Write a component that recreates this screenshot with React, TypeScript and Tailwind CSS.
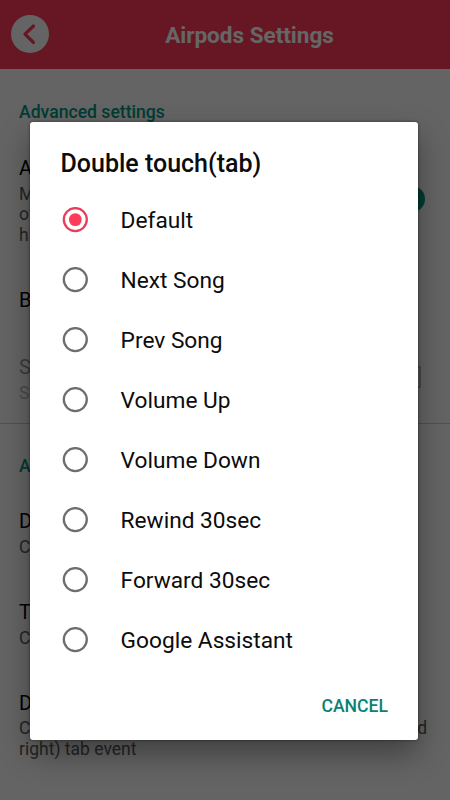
import clsx from "clsx";

const options = [
  "Default",
  "Next Song",
  "Prev Song",
  "Volume Up",
  "Volume Down",
  "Rewind 30sec",
  "Forward 30sec",
  "Google Assistant",
];

type RadioRowProps = {
  label: string;
  checked: boolean;
};

function RadioRow({ label, checked }: RadioRowProps) {
  return (
    <li className="flex h-[60.1px] items-center pl-8">
      <svg viewBox="0 0 26 26" className="h-[26px] w-[26px] shrink-0">
        <circle
          cx="13.3"
          cy="12.6"
          r="11.5"
          fill="none"
          strokeWidth="2.3"
          className={clsx(checked ? "stroke-[#e83e5b]" : "stroke-[#6e6e6e]")}
        />
        {checked ? (
          <circle cx="13.3" cy="12.6" r="6.4" className="fill-[#ff3b5c]" />
        ) : null}
      </svg>
      <span className="pt-0.5 pl-[32.6px] text-[22.7px] leading-7">
        {label}
      </span>
    </li>
  );
}

type SettingProps = {
  title: string;
  lines?: string[];
  disabled?: boolean;
  className?: string;
};

function Setting({ title, lines = [], disabled, className }: SettingProps) {
  return (
    <div className={clsx("px-[19px]", disabled && "opacity-40", className)}>
      <p className="mb-[2.5px] text-[20px] leading-[26px] text-black">
        {title}
      </p>
      {lines.map((line) => (
        <p key={line} className="text-[17.5px] leading-[20.5px] text-[#5c5c5c]">
          {line}
        </p>
      ))}
    </div>
  );
}

function SettingsPage() {
  return (
    <div className="flex h-full flex-col bg-[#fafafa]">
      <header className="flex h-[69px] shrink-0 items-center bg-[#ff3b59] pl-[11px]">
        <button className="mb-px flex h-[38px] w-[38px] items-center justify-center rounded-full bg-[#fafafa]">
          <svg viewBox="0 0 38 38" className="h-[38px] w-[38px]">
            <path
              d="M22.5 11 14 19.2 22.5 27.5"
              fill="none"
              stroke="#ff3b59"
              strokeWidth="3.2"
              strokeLinecap="round"
              strokeLinejoin="round"
            />
          </svg>
        </button>
        <h1 className="flex-1 pt-0.5 text-center text-[22.5px] font-bold text-white">
          Airpods Settings
        </h1>
      </header>

      <section className="h-[355px] shrink-0 border-b border-[#c8c8c8]">
        <h2 className="h-[86px] px-[19px] pt-[31px] text-[17.6px] leading-6 font-medium text-[#009682]">
          Advanced settings
        </h2>
        <div className="flex h-[132px] justify-between">
          <Setting title="A" lines={["M", "of", "hi"]} />
          <div className="mt-[31px] mr-[25px] h-[26px] w-[26px] rounded-full bg-[#009682]" />
        </div>
        <Setting title="B" className="h-[67px]" />
        <div className="flex justify-between">
          <Setting title="S" lines={["S"]} disabled />
          <div className="mt-3 mr-[29px] h-[22px] w-[22px] border-2 border-[#b8b8b8]" />
        </div>
      </section>

      <section>
        <h2 className="h-[84px] px-[19px] pt-[30px] text-[17.6px] leading-6 font-medium text-[#009682]">
          A
        </h2>
        <Setting title="D" lines={["C"]} className="h-[91px]" />
        <Setting title="T" lines={["C"]} className="h-[91px]" />
        <div className="px-[19px]">
          <p className="mb-0.5 text-[20px] leading-[26px] text-black">D</p>
          <div className="flex justify-between pr-1 text-[17.5px] leading-[20.5px] text-[#5c5c5c]">
            <span>C</span>
            <span>d</span>
          </div>
          <p className="text-[17.5px] leading-[20.5px] text-[#5c5c5c]">
            right) tab event
          </p>
        </div>
      </section>
    </div>
  );
}

export default function App() {
  return (
    <main className="relative h-[800px] w-[450px] overflow-hidden font-['Roboto',sans-serif]">
      <SettingsPage />

      <div className="absolute inset-0 bg-black/60 pt-[122px] pl-[30px]">
        <div
          role="dialog"
          className="flex h-[618px] w-[388px] flex-col rounded-[3px] bg-white text-[#0c0c0c] shadow-[0_14px_30px_rgba(0,0,0,0.36),0_0_3px_rgba(0,0,0,0.5)]"
        >
          <h2 className="h-[67.7px] pt-[25.5px] pl-[30.5px] text-[25px] leading-8 font-medium">
            Double touch(tab)
          </h2>
          <ul>
            {options.map((option) => (
              <RadioRow
                key={option}
                label={option}
                checked={option === "Default"}
              />
            ))}
          </ul>
          <button className="mt-auto mr-[30px] mb-[22px] self-end text-[17.6px] leading-6 font-medium text-[#0b8271]">
            CANCEL
          </button>
        </div>
      </div>
    </main>
  );
}
